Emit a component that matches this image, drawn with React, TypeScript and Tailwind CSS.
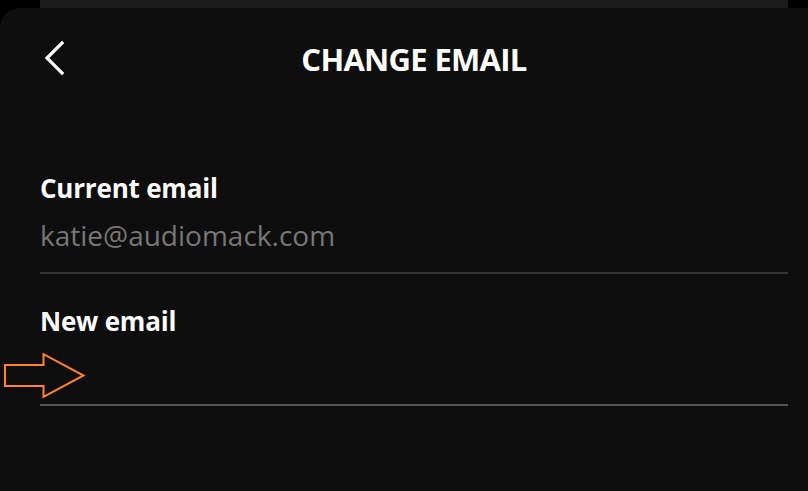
import React from "react";

export default function App() {
  return (
    <div className="w-[808px] h-[491px] bg-black overflow-hidden flex flex-col" style={{ fontFamily: '"Open Sans", sans-serif' }}>
      <div className="ml-[40px] mr-[20px] h-[8px] bg-[#1b1b1b] shrink-0" />
      <div className="flex-1 bg-[#0e0e0e] rounded-tl-[20px] flex flex-col pl-[40px] pr-[20px]">
        <div className="relative pt-[36px] flex justify-center">
          <button className="absolute left-0 top-[32px] w-[28px] h-[36px] flex items-center justify-center">
            <svg width="24" height="36" viewBox="0 0 24 36" fill="none">
              <path d="M20 3 L5 18 L20 33" stroke="white" strokeWidth="3.2" strokeLinecap="square" strokeLinejoin="miter" />
            </svg>
          </button>
          <h1 className="text-white font-bold text-[31px] tracking-[-0.7px] leading-[31px]">CHANGE EMAIL</h1>
        </div>
        <div className="pt-[100px]">
          <div className="text-white font-bold text-[26px] tracking-[-0.2px] leading-[26px]">Current email</div>
          <div className="text-[#777777] text-[28px] leading-[28px] mt-[20px]">katie@audiomack.com</div>
          <div className="h-[2px] bg-[#333333] mt-[23px]" />
          <div className="relative mt-[34px]">
            <div className="text-white font-bold text-[26px] tracking-[-0.2px] leading-[26px]">New email</div>
            <svg className="absolute left-[-36px] top-[45px]" width="82" height="46" viewBox="0 0 82 46" fill="none">
              <path d="M1 12 H39.5 V1.2 L79.5 22.5 L39.5 43.8 V33 H1 Z" stroke="#ff8329" strokeWidth="2" strokeLinejoin="miter" />
            </svg>
          </div>
          <div className="h-[2px] bg-[#555555] mt-[70px]" />
        </div>
      </div>
    </div>
  );
}
